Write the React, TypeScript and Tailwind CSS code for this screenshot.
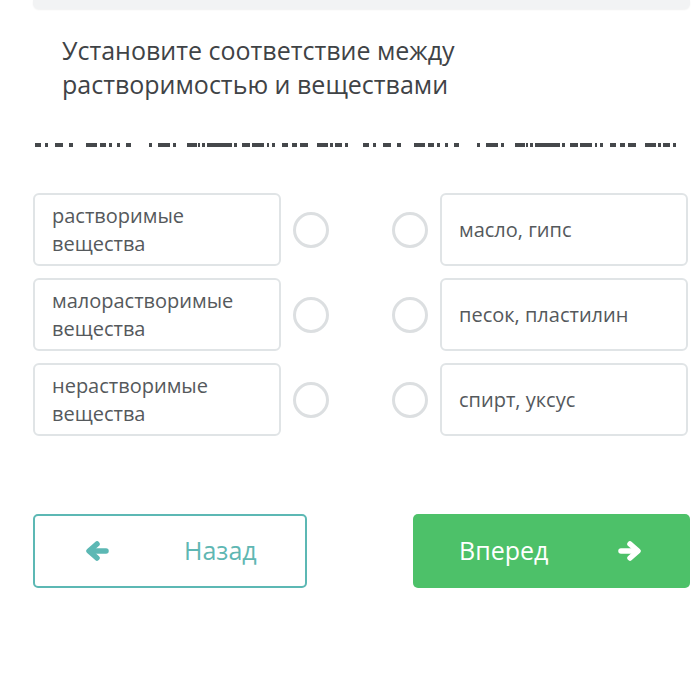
import React from 'react';

// dash pattern of the clipped text line, x offsets relative to the line start
const dashes: [number, number][] = [
  [0, 6], [10, 3], [20, 8], [34, 4], [51, 11], [65, 6], [74, 3], [82, 3], [91, 5],
  [114, 3], [123, 12], [138, 3], [152, 10], [163, 2], [167, 3], [172, 25], [199, 3],
  [207, 8], [217, 12], [232, 2], [237, 3], [247, 6], [257, 5], [265, 8], [282, 11],
  [295, 3], [300, 7], [310, 3],
];

const left = ['растворимые вещества', 'малорастворимые вещества', 'нерастворимые вещества'];
const right = ['масло, гипс', 'песок, пластилин', 'спирт, уксус'];

const Circle = () => (
  <div className="w-[36px] h-[36px] rounded-full border-[3px] border-[#dcdfe1] bg-white shrink-0" />
);

const Arrow = ({ dir, color }: { dir: 'left' | 'right'; color: string }) => (
  <svg width="24" height="22" viewBox="0 0 24 22" className="shrink-0">
    <g
      transform={dir === 'right' ? 'translate(24 0) scale(-1 1)' : undefined}
      fill="none"
      stroke={color}
      strokeWidth="5.5"
      strokeLinecap="round"
      strokeLinejoin="round"
    >
      <path d="M21 11H5" />
      <path d="M12 4L4 11L12 18" />
    </g>
  </svg>
);

export default function App() {
  return (
    <div className="w-[691px] h-[676px] bg-white overflow-hidden" style={{ fontFamily: '"Open Sans", sans-serif' }}>
      <div className="ml-[33px] mr-[1px] h-[9px] bg-[#f2f3f4] rounded-b-md shadow-[0_1px_2px_rgba(0,0,0,0.06)]" />

      <h1 className="mt-[24px] pl-[62px] text-[25px] leading-[34px] text-[#3f4346] font-normal">
        Установите соответствие между
        <br />
        растворимостью и веществами
      </h1>

      <div className="mt-[42px] pl-[35px]">
        <svg width="656" height="5" className="block">
          {dashes.map(([x, w], i) => (
            <rect key={i} x={x} y={0} width={w} height={4} fill="#45484b" />
          ))}
          {dashes.map(([x, w], i) => (
            <rect key={'b' + i} x={x + 328} y={0} width={w} height={4} fill="#45484b" />
          ))}
        </svg>
      </div>

      <div className="mt-[45px] pl-[33px] flex flex-col gap-[12px]">
        {left.map((l, i) => (
          <div key={i} className="flex items-center">
            <div className="w-[248px] h-[73px] border-2 border-[#e0e4e6] rounded-[6px] pl-[17px] pr-3 flex items-center text-[20px] leading-[28px] text-[#55595c]">
              {l}
            </div>
            <div className="ml-[12px]">
              <Circle />
            </div>
            <div className="ml-[63px]">
              <Circle />
            </div>
            <div className="ml-[12px] w-[248px] h-[73px] border-2 border-[#e0e4e6] rounded-[6px] pl-[17px] flex items-center text-[20px] leading-[28px] text-[#55595c]">
              {right[i]}
            </div>
          </div>
        ))}
      </div>

      <div className="mt-[78px] pl-[33px] pr-[1px] flex justify-between">
        <div className="w-[274px] h-[74px] border-2 border-[#5cb8b4] rounded-[5px] flex items-center pl-[50px]">
          <Arrow dir="left" color="#5cb8b4" />
          <span className="ml-[75px] text-[25px] text-[#5fb7b3]">Назад</span>
        </div>
        <div className="w-[277px] h-[74px] bg-[#4dc169] rounded-[5px] flex items-center justify-between pl-[46px] pr-[48px]">
          <span className="text-[25px] text-white">Вперед</span>
          <Arrow dir="right" color="#ffffff" />
        </div>
      </div>
    </div>
  );
}
